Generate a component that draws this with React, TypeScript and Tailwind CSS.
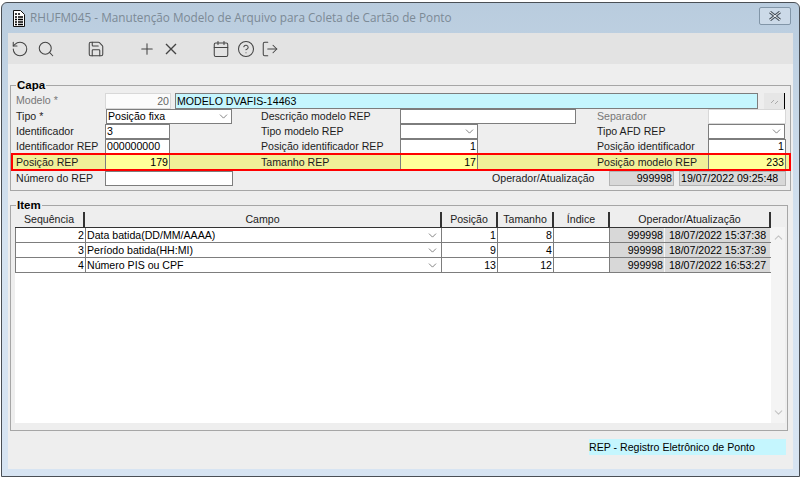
import { ReactNode } from 'react';
import { Calendar, ChevronDown, ChevronUp, CircleHelp, LogOut, Plus, RotateCcw, Save, Search } from 'lucide-react';

function Label({ className, children, muted }: { className: string; children: ReactNode; muted?: boolean }) {
  return (
    <span className={`block shrink-0 leading-[15px] whitespace-nowrap ${muted ? 'text-[#777]' : 'text-[#1c1c1c]'} ${className}`}>
      {children}
    </span>
  );
}

function Field({ className, children }: { className: string; children?: ReactNode }) {
  return (
    <span className={`flex shrink-0 items-center border px-[1px] leading-none whitespace-nowrap ${className}`}>
      {children}
    </span>
  );
}

function Combo({ className, children }: { className: string; children?: ReactNode }) {
  return (
    <Field className={`justify-between border-[#7d7d7d] bg-white ${className}`}>
      <span>{children}</span>
      <ChevronDown size={13} strokeWidth={1.2} className="text-[#444]" />
    </Field>
  );
}

const rows = [
  { seq: 2, campo: 'Data batida(DD/MM/AAAA)', pos: 1, tam: 8, date: '18/07/2022 15:37:38' },
  { seq: 3, campo: 'Período batida(HH:MI)', pos: 9, tam: 4, date: '18/07/2022 15:37:39' },
  { seq: 4, campo: 'Número PIS ou CPF', pos: 13, tam: 12, date: '18/07/2022 16:53:27' },
];

function HeaderCell({ className, children }: { className: string; children: ReactNode }) {
  return (
    <div className={`flex shrink-0 items-center justify-center border-r-2 border-r-[#333] bg-[#eee] pt-[1px] text-[#222] ${className}`}>
      {children}
    </div>
  );
}

const normal = 'border-[#7d7d7d] bg-white';
const highlight = 'justify-end border-[#7d7d7d] bg-[#ffff99]';
const readonly = 'border-[#b4b4b4] bg-[#d8d8d8]';

export default function App() {
  return (
    <div className='h-[480px] w-[803px] overflow-hidden bg-white pt-[2px] pl-[1px] font-["Liberation_Sans",Arial,sans-serif] text-[10.6px]'>
      <div className="h-[475px] w-[799px] rounded-t-[6px] border border-[#4a4f55] bg-gradient-to-b from-[#b9ccde] via-[#d5e3f1] to-[#d7e4f2] px-[6px]">
        {/* barra de titulo */}
        <div className="flex h-[30px] items-center">
          <svg width="12" height="17" viewBox="0 0 12 17" className="ml-[5px] shrink-0">
            <path d="M.5.5h7l4 4v12H.5z" fill="#fff" stroke="#111" />
            <path d="M2 4h2M5 4h2M2 7h2M5 7h5M2 9.500h2M5 9.500h5M2 12h2M5 12h5M2 14.500h2M5 14.500h5" stroke="#000" strokeWidth="1.300" />
          </svg>
          <span className='ml-[5px] font-["Open_Sans",sans-serif] text-[11.75px] text-[#7c8a96]'>
            RHUFM045 - Manutenção Modelo de Arquivo para Coleta de Cartão de Ponto
          </span>
          <div className="mt-[-4px] mr-[2px] ml-auto flex h-[18px] w-[32px] items-center justify-center rounded-[2px] border border-[#8296a8] bg-[#ccdae8]">
            <svg width="14" height="10" viewBox="0 0 14 10">
              <path d="M2 1l10 8M12 1L2 9" stroke="#4a5560" strokeWidth="3" />
              <path d="M2 1l10 8M12 1L2 9" stroke="#f2f5f8" strokeWidth="1" />
            </svg>
          </div>
        </div>

        {/* toolbar */}
        <div className="flex h-[31px] items-center bg-[#e3e3e3] pl-[3px] text-[#444]">
          <RotateCcw size={18} strokeWidth={1.400} />
          <Search size={18} strokeWidth={1.400} className="ml-[8px]" />
          <Save size={18} strokeWidth={1.400} className="ml-[32px]" />
          <Plus size={18} strokeWidth={1.400} className="ml-[33px]" />
          <svg width="18" height="18" viewBox="0 0 18 18" fill="none" stroke="currentColor" strokeWidth="1.400" className="ml-[6px]">
            <path d="M4 4l10 10M14 4L4 14" />
          </svg>
          <Calendar size={18} strokeWidth={1.400} className="ml-[32px]" />
          <CircleHelp size={18} strokeWidth={1.400} className="ml-[7px]" />
          <LogOut size={18} strokeWidth={1.400} className="ml-[6px]" />
        </div>

        {/* conteudo */}
        <div className="h-[405px] bg-[#eee] px-[2px] pt-[14px]">
          <fieldset className="h-[113px] w-[778px] border border-[#a6a6a6] pl-[5px]">
            <legend className="px-[1px] text-[11.5px] leading-[14px] font-bold text-black">Capa</legend>

            <div className="mt-[1px] flex h-[16px]">
              <Label className="w-[89px]" muted>Modelo *</Label>
              <Field className="w-[66px] justify-end border-[#d8d8d8] bg-[#fbfbfb] text-[#666]">20</Field>
              <Field className="ml-[4px] w-[583px] border-[#7d7d7d] bg-[#c5f6fe] text-black">MODELO DVAFIS-14463</Field>
              <span className="ml-[6px] flex w-[21px] items-center justify-center border-r border-r-black bg-[#e6e6e6]">
                <svg width="9" height="7" viewBox="0 0 9 7" stroke="#aaa">
                  <path d="M1 5l3-3M5 6l3-3" />
                </svg>
              </span>
            </div>

            <div className="flex h-[15px]">
              <Label className="w-[90px]">Tipo *</Label>
              <Combo className="w-[126px]">Posição fixa</Combo>
              <Label className="ml-[29px] w-[139px]">Descrição modelo REP</Label>
              <Field className={`w-[176px] ${normal}`} />
              <Label className="ml-[21px] w-[111px]" muted>Separador</Label>
              <Field className="w-[78px] border-[#d8d8d8] bg-white" />
            </div>

            <div className="flex h-[15px]">
              <Label className="w-[89px]">Identificador</Label>
              <Field className={`w-[65px] ${normal}`}>3</Field>
              <Label className="ml-[91px] w-[139px]">Tipo modelo REP</Label>
              <Combo className="w-[78px]" />
              <Label className="ml-[119px] w-[111px]">Tipo AFD REP</Label>
              <Combo className="w-[77px]" />
            </div>

            <div className="flex h-[15px]">
              <Label className="w-[89px]">Identificador REP</Label>
              <Field className={`w-[65px] ${normal}`}>000000000</Field>
              <Label className="ml-[91px] w-[139px]">Posição identificador REP</Label>
              <Field className={`w-[78px] justify-end ${normal}`}>1</Field>
              <Label className="ml-[119px] w-[111px]">Posição identificador</Label>
              <Field className={`w-[78px] justify-end ${normal}`}>1</Field>
            </div>

            <div className="-ml-[4px] flex h-[16px] w-[778px] items-center bg-[#f0f098] pl-[4px] outline-2 -outline-offset-1 outline-[#f00]">
              <Label className="w-[89px]">Posição REP</Label>
              <Field className={`h-[16px] w-[65px] ${highlight}`}>179</Field>
              <Label className="ml-[91px] w-[139px]">Tamanho REP</Label>
              <Field className={`h-[16px] w-[78px] ${highlight}`}>17</Field>
              <Label className="ml-[119px] w-[111px]">Posição modelo REP</Label>
              <Field className={`h-[16px] w-[78px] ${highlight}`}>233</Field>
            </div>

            <div className="mt-[1px] flex h-[15px]">
              <Label className="w-[89px]">Número do REP</Label>
              <Field className={`w-[128px] ${normal}`} />
              <Label className="ml-[259px] w-[117px]">Operador/Atualização</Label>
              <Field className={`w-[65px] justify-end ${readonly}`}>999998</Field>
              <Field className={`ml-[5px] w-[107px] ${readonly}`}>19/07/2022 09:25:48</Field>
            </div>
          </fieldset>

          <fieldset className="mt-[7px] h-[233px] w-[778px] border border-[#a6a6a6] pl-[4px]">
            <legend className="ml-[1px] px-[1px] text-[11.5px] leading-[14px] font-bold text-black">Item</legend>

            <div className="flex h-[15px] w-[756px]">
              <HeaderCell className="w-[70px]">Sequência</HeaderCell>
              <HeaderCell className="w-[357px]">Campo</HeaderCell>
              <HeaderCell className="w-[56px]">Posição</HeaderCell>
              <HeaderCell className="w-[56px]">Tamanho</HeaderCell>
              <HeaderCell className="w-[56px]">Índice</HeaderCell>
              <HeaderCell className="w-[161px]">Operador/Atualização</HeaderCell>
            </div>

            <div className="flex h-[196px] w-[770px] bg-white">
              <div className="w-[756px] shrink-0">
                {rows.map((row) => (
                  <div key={row.seq} className="flex h-[15px] border-b border-[#7d7d7d] leading-none text-black first:h-[16px] first:border-t first:border-t-[#333]">
                    <div className="flex w-[71px] shrink-0 items-center justify-end border-x border-[#7d7d7d] pr-[1px]">{row.seq}</div>
                    <div className="flex w-[356px] shrink-0 items-center justify-between border-r border-[#7d7d7d] pr-[2px] pl-[1px]">
                      <span>{row.campo}</span>
                      <ChevronDown size={13} strokeWidth={1.200} className="text-[#444]" />
                    </div>
                    <div className="flex w-[56px] shrink-0 items-center justify-end border-r border-[#7d7d7d] pr-[1px]">{row.pos}</div>
                    <div className="flex w-[56px] shrink-0 items-center justify-end border-r border-[#7d7d7d] pr-[1px]">{row.tam}</div>
                    <div className="w-[56px] shrink-0 border-r border-[#7d7d7d]" />
                    <div className="flex w-[55px] shrink-0 items-center justify-end border-r border-[#f4f4f4] bg-[#d8d8d8] pr-[1px]">999998</div>
                    <div className="flex w-[106px] shrink-0 items-center justify-center border-r border-[#f4f4f4] bg-[#d8d8d8] whitespace-nowrap">{row.date}</div>
                  </div>
                ))}
              </div>
              <div className="flex w-[14px] shrink-0 flex-col items-center justify-between bg-[#f4f4f4] py-[4px] text-[#c4c4c4]">
                <ChevronUp size={13} strokeWidth={2} />
                <ChevronDown size={13} strokeWidth={2} />
              </div>
            </div>
          </fieldset>

          <div className="mt-[8px] ml-[579px] flex h-[16px] w-[197px] items-center bg-[#c5f6fe] leading-none text-black">
            REP - Registro Eletrônico de Ponto
          </div>
        </div>
      </div>
    </div>
  );
}
